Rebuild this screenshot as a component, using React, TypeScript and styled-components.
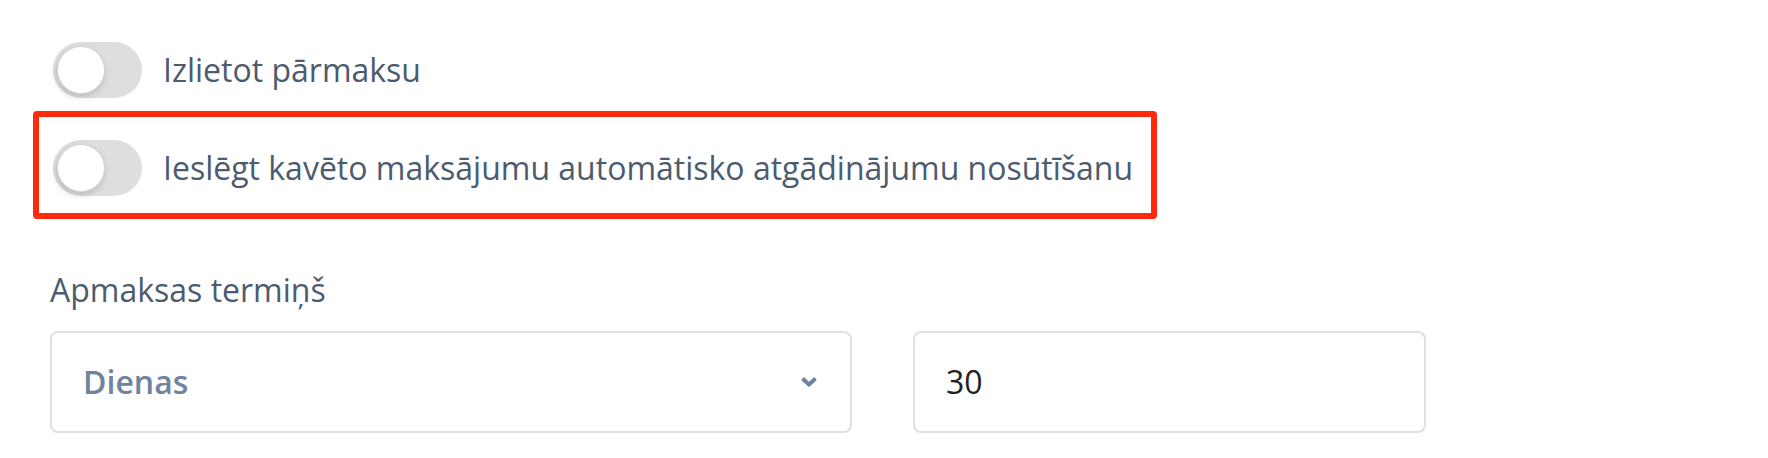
import React from "react";
import styled, { createGlobalStyle } from "styled-components";

const GlobalStyle = createGlobalStyle`
  html, body {
    margin: 0;
    padding: 0;
    background: #ffffff;
  }
  body {
    font-family: "Open Sans", "Noto Sans", sans-serif;
  }
  * { box-sizing: border-box; }
`;

const Page = styled.div`
  display: flex;
  flex-direction: column;
  align-items: flex-start;
  padding: 42px 0 0 33px;
  width: 1768px;
  height: 458px;
  background: #fff;
`;

const OptionRow = styled.div<{ $inset?: number }>`
  display: flex;
  align-items: center;
  gap: 21px;
  padding-left: ${(p) => p.$inset ?? 0}px;
`;

const Highlight = styled.div`
  width: 1124px;
  margin-top: 13px;
  border: 6px solid #ff2a0b;
  border-radius: 4px;
  padding: 23px 14px 17px;
`;

const Track = styled.div`
  width: 89px;
  height: 56px;
  border-radius: 28px;
  background: #dedede;
  display: flex;
  align-items: center;
  padding-left: 4px;
  flex-shrink: 0;
`;

const Knob = styled.div`
  width: 48px;
  height: 48px;
  border-radius: 50%;
  background: #ffffff;
  border: 1px solid #d6d6d6;
  box-shadow: -1px 3px 7px rgba(0, 0, 0, 0.16);
`;

const OptionText = styled.span`
  font-size: 32px;
  line-height: 44px;
  color: #4c5b6e;
  white-space: nowrap;
`;

const FieldGroup = styled.div`
  margin-left: 17px;
  margin-top: 49px;
  display: flex;
  flex-direction: column;
  gap: 19px;
`;

const Label = styled.div`
  font-size: 32px;
  line-height: 44px;
  color: #4c5b6e;
`;

const FieldsRow = styled.div`
  display: flex;
  gap: 61px;
`;

const Box = styled.div<{ $width: number }>`
  width: ${(p) => p.$width}px;
  height: 102px;
  border: 2px solid #e0e0e0;
  border-radius: 8px;
  display: flex;
  align-items: center;
  justify-content: space-between;
  padding: 0 32px 0 31px;
  background: #fff;
`;

const SelectValue = styled.span`
  font-size: 32px;
  font-weight: 600;
  color: #6e84a0;
  line-height: 44px;
`;

const InputValue = styled.span`
  font-size: 32px;
  color: #222222;
  line-height: 44px;
`;

const Chevron = () => (
  <svg width="18" height="12" viewBox="0 0 18 12" aria-hidden>
    <polyline
      points="2.5,2.5 9,8.5 15.5,2.5"
      fill="none"
      stroke="#6e84a0"
      strokeWidth="4"
      strokeLinecap="butt"
      strokeLinejoin="miter"
    />
  </svg>
);

const Toggle = () => (
  <Track>
    <Knob />
  </Track>
);

export default function App() {
  return (
    <>
      <GlobalStyle />
      <Page>
        <OptionRow $inset={20}>
          <Toggle />
          <OptionText>Izlietot pārmaksu</OptionText>
        </OptionRow>
        <Highlight>
          <OptionRow>
            <Toggle />
            <OptionText>
              Ieslēgt kavēto maksājumu automātisko atgādinājumu nosūtīšanu
            </OptionText>
          </OptionRow>
        </Highlight>
        <FieldGroup>
          <Label>Apmaksas termiņš</Label>
          <FieldsRow>
            <Box $width={802}>
              <SelectValue>Dienas</SelectValue>
              <Chevron />
            </Box>
            <Box $width={513}>
              <InputValue>30</InputValue>
            </Box>
          </FieldsRow>
        </FieldGroup>
      </Page>
    </>
  );
}
